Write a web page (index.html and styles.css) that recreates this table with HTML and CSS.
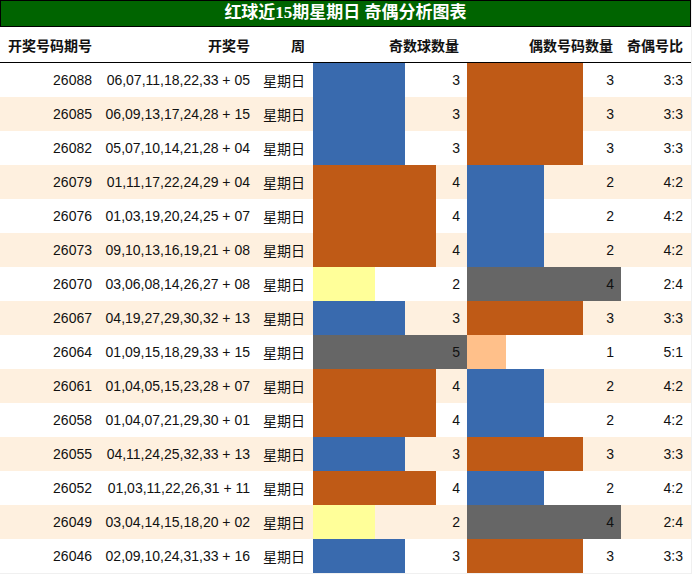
FILE: index.html
```html
<!DOCTYPE html>
<html lang="zh-CN">
<head>
<meta charset="utf-8">
<title>红球近15期星期日 奇偶分析图表</title>
<link rel="stylesheet" href="styles.css">
</head>
<body>
<div class="chart">
  <div class="title">红球近15期星期日 奇偶分析图表</div>
  <div class="grid head">
    <div class="c">开奖号码期号</div>
    <div class="c">开奖号</div>
    <div class="c">周</div>
    <div class="c">奇数球数量</div>
    <div class="c">偶数号码数量</div>
    <div class="c">奇偶号比</div>
  </div>

  <div class="grid row">
    <div class="c">26088</div><div class="c">06,07,11,18,22,33 + 05</div><div class="c">星期日</div>
    <div class="c bar"><span class="fill o3" style="width:60%"></span><span class="n">3</span></div>
    <div class="c bar"><span class="fill e3" style="width:75%"></span><span class="n">3</span></div>
    <div class="c">3:3</div>
  </div>
  <div class="grid row alt">
    <div class="c">26085</div><div class="c">06,09,13,17,24,28 + 15</div><div class="c">星期日</div>
    <div class="c bar"><span class="fill o3" style="width:60%"></span><span class="n">3</span></div>
    <div class="c bar"><span class="fill e3" style="width:75%"></span><span class="n">3</span></div>
    <div class="c">3:3</div>
  </div>
  <div class="grid row">
    <div class="c">26082</div><div class="c">05,07,10,14,21,28 + 04</div><div class="c">星期日</div>
    <div class="c bar"><span class="fill o3" style="width:60%"></span><span class="n">3</span></div>
    <div class="c bar"><span class="fill e3" style="width:75%"></span><span class="n">3</span></div>
    <div class="c">3:3</div>
  </div>
  <div class="grid row alt">
    <div class="c">26079</div><div class="c">01,11,17,22,24,29 + 04</div><div class="c">星期日</div>
    <div class="c bar"><span class="fill o4" style="width:80%"></span><span class="n">4</span></div>
    <div class="c bar"><span class="fill e2" style="width:50%"></span><span class="n">2</span></div>
    <div class="c">4:2</div>
  </div>
  <div class="grid row">
    <div class="c">26076</div><div class="c">01,03,19,20,24,25 + 07</div><div class="c">星期日</div>
    <div class="c bar"><span class="fill o4" style="width:80%"></span><span class="n">4</span></div>
    <div class="c bar"><span class="fill e2" style="width:50%"></span><span class="n">2</span></div>
    <div class="c">4:2</div>
  </div>
  <div class="grid row alt">
    <div class="c">26073</div><div class="c">09,10,13,16,19,21 + 08</div><div class="c">星期日</div>
    <div class="c bar"><span class="fill o4" style="width:80%"></span><span class="n">4</span></div>
    <div class="c bar"><span class="fill e2" style="width:50%"></span><span class="n">2</span></div>
    <div class="c">4:2</div>
  </div>
  <div class="grid row">
    <div class="c">26070</div><div class="c">03,06,08,14,26,27 + 08</div><div class="c">星期日</div>
    <div class="c bar"><span class="fill o2" style="width:40%"></span><span class="n">2</span></div>
    <div class="c bar"><span class="fill e4" style="width:100%"></span><span class="n">4</span></div>
    <div class="c">2:4</div>
  </div>
  <div class="grid row alt">
    <div class="c">26067</div><div class="c">04,19,27,29,30,32 + 13</div><div class="c">星期日</div>
    <div class="c bar"><span class="fill o3" style="width:60%"></span><span class="n">3</span></div>
    <div class="c bar"><span class="fill e3" style="width:75%"></span><span class="n">3</span></div>
    <div class="c">3:3</div>
  </div>
  <div class="grid row">
    <div class="c">26064</div><div class="c">01,09,15,18,29,33 + 15</div><div class="c">星期日</div>
    <div class="c bar"><span class="fill o5" style="width:100%"></span><span class="n">5</span></div>
    <div class="c bar"><span class="fill e1" style="width:25%"></span><span class="n">1</span></div>
    <div class="c">5:1</div>
  </div>
  <div class="grid row alt">
    <div class="c">26061</div><div class="c">01,04,05,15,23,28 + 07</div><div class="c">星期日</div>
    <div class="c bar"><span class="fill o4" style="width:80%"></span><span class="n">4</span></div>
    <div class="c bar"><span class="fill e2" style="width:50%"></span><span class="n">2</span></div>
    <div class="c">4:2</div>
  </div>
  <div class="grid row">
    <div class="c">26058</div><div class="c">01,04,07,21,29,30 + 01</div><div class="c">星期日</div>
    <div class="c bar"><span class="fill o4" style="width:80%"></span><span class="n">4</span></div>
    <div class="c bar"><span class="fill e2" style="width:50%"></span><span class="n">2</span></div>
    <div class="c">4:2</div>
  </div>
  <div class="grid row alt">
    <div class="c">26055</div><div class="c">04,11,24,25,32,33 + 13</div><div class="c">星期日</div>
    <div class="c bar"><span class="fill o3" style="width:60%"></span><span class="n">3</span></div>
    <div class="c bar"><span class="fill e3" style="width:75%"></span><span class="n">3</span></div>
    <div class="c">3:3</div>
  </div>
  <div class="grid row">
    <div class="c">26052</div><div class="c">01,03,11,22,26,31 + 11</div><div class="c">星期日</div>
    <div class="c bar"><span class="fill o4" style="width:80%"></span><span class="n">4</span></div>
    <div class="c bar"><span class="fill e2" style="width:50%"></span><span class="n">2</span></div>
    <div class="c">4:2</div>
  </div>
  <div class="grid row alt">
    <div class="c">26049</div><div class="c">03,04,14,15,18,20 + 02</div><div class="c">星期日</div>
    <div class="c bar"><span class="fill o2" style="width:40%"></span><span class="n">2</span></div>
    <div class="c bar"><span class="fill e4" style="width:100%"></span><span class="n">4</span></div>
    <div class="c">2:4</div>
  </div>
  <div class="grid row">
    <div class="c">26046</div><div class="c">02,09,10,24,31,33 + 16</div><div class="c">星期日</div>
    <div class="c bar"><span class="fill o3" style="width:60%"></span><span class="n">3</span></div>
    <div class="c bar"><span class="fill e3" style="width:75%"></span><span class="n">3</span></div>
    <div class="c">3:3</div>
  </div>
</div>
</body>
</html>
```
FILE: styles.css
```css
html, body {
  margin: 0;
  padding: 0;
}
body {
  background: #f0f0f0;
  font-family: "Liberation Sans", "Noto Sans CJK SC", sans-serif;
  font-size: 14px;
  color: #111;
}
.chart {
  width: 691px;
  background: #fff;
}
.title {
  box-sizing: border-box;
  height: 27px;
  border: 1px solid #000;
  background: #006400;
  color: #fff;
  font-family: "Liberation Serif", "Noto Sans CJK SC", serif;
  font-weight: bold;
  font-size: 17px;
  line-height: 24px;
  text-align: center;
}
.grid {
  display: grid;
  grid-template-columns: 100px 158px 55px 154px 154px 70px;
}
.head {
  height: 35px;
  border-bottom: 1px solid #000;
  font-weight: bold;
  font-family: "Noto Sans CJK SC", sans-serif;
}
.row {
  height: 34px;
}
.row.alt {
  background: #fef0df;
}
.c {
  display: flex;
  align-items: center;
  justify-content: flex-end;
  padding-right: 8px;
  white-space: nowrap;
  min-width: 0;
}
.c.bar {
  display: grid;
  grid-template-columns: minmax(0, 1fr);
  grid-template-rows: minmax(0, 1fr);
  padding-right: 0;
  align-items: stretch;
}
.fill {
  grid-area: 1 / 1;
  justify-self: start;
}
.n {
  grid-area: 1 / 1;
  justify-self: end;
  align-self: center;
  padding-right: 7px;
}
.o2 { background: #ffff99; }
.o3 { background: #396aae; }
.o4 { background: #bf5a16; }
.o5 { background: #666666; }
.e1 { background: #ffc08a; }
.e2 { background: #396aae; }
.e3 { background: #bf5a16; }
.e4 { background: #666666; }
```
